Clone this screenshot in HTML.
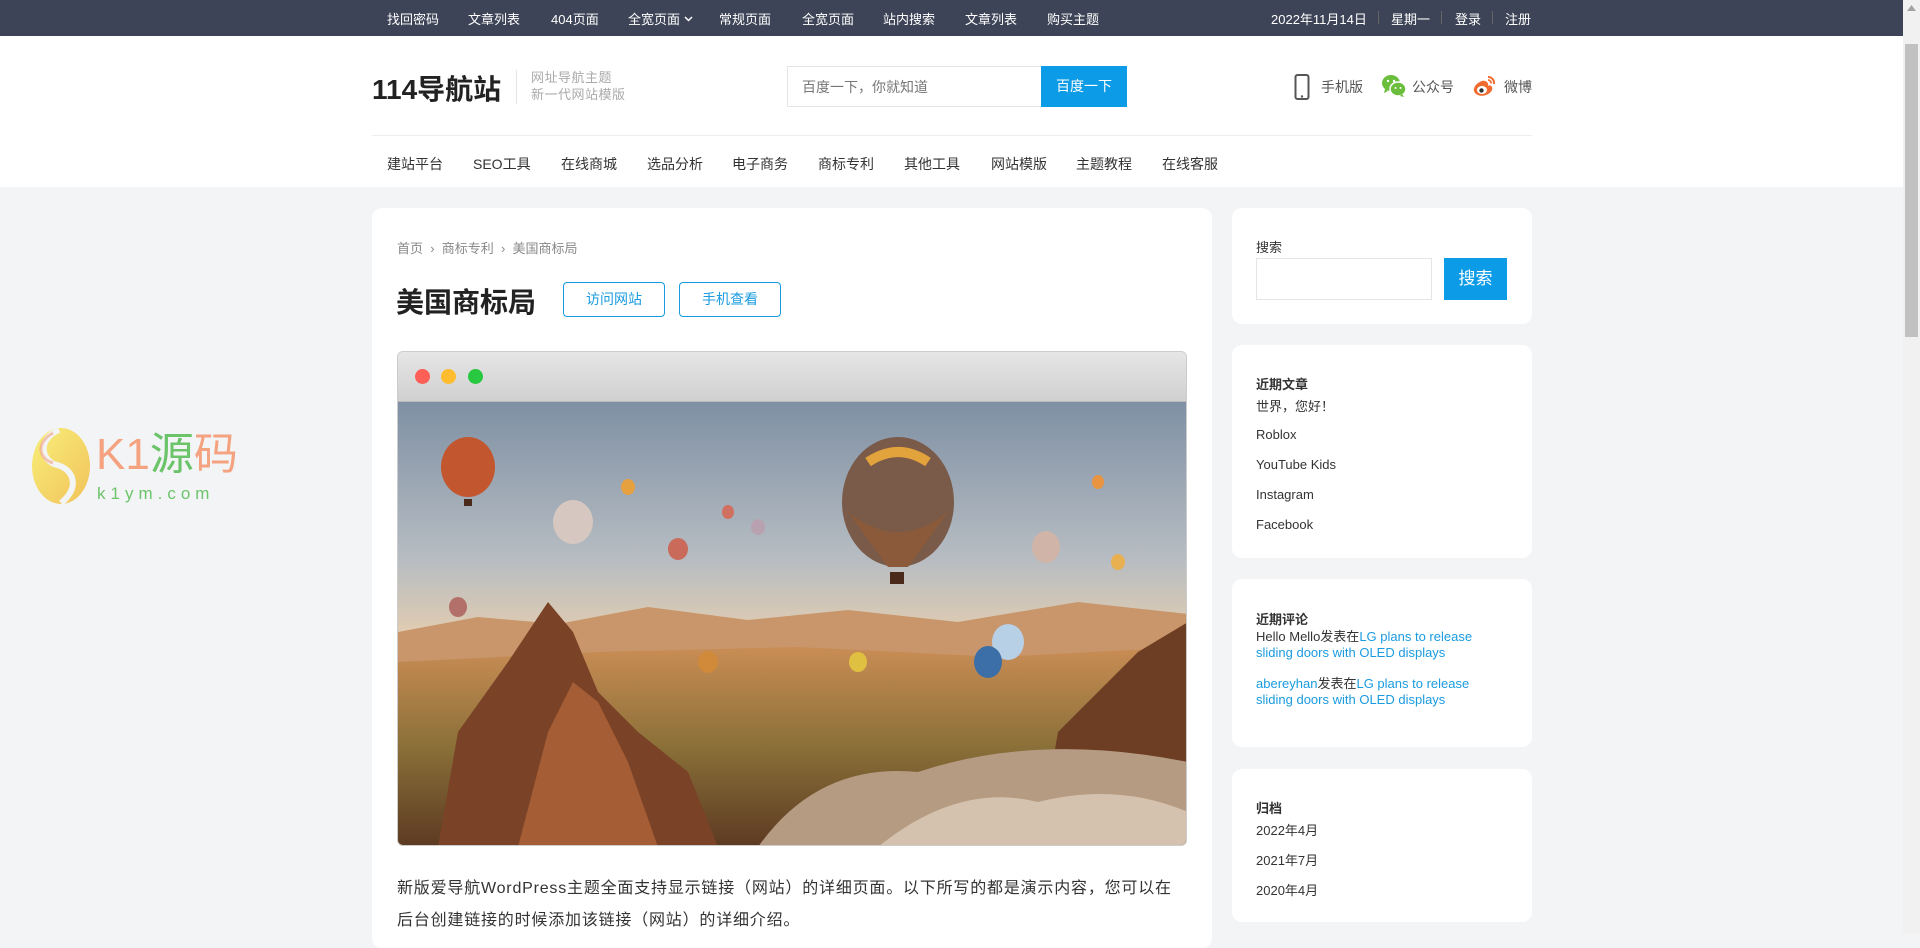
<!DOCTYPE html>
<html><head><meta charset="utf-8">
<style>
*{margin:0;padding:0;box-sizing:border-box}
body{width:1920px;height:933px;overflow:hidden;background:#f3f4f6;font-family:"Liberation Sans","Noto Sans CJK SC",sans-serif;color:#333;position:relative}
.a{position:absolute;white-space:nowrap}
#top{position:absolute;left:0;top:0;width:1903px;height:36px;background:#3e4457;color:#fff;font-size:13px}
#top .a{top:9px}
#hdr{position:absolute;left:0;top:36px;width:1903px;height:151px;background:#fff}
.nav2{font-size:14px;color:#333;top:118px}
.card{position:absolute;background:#fff;border-radius:10px}
.sb{font-size:13px;color:#333}
.blue{color:#1a9be0}
#scroll{position:absolute;left:1903px;top:0;width:17px;height:933px;background:#f1f1f1}
#thumb{position:absolute;left:1905px;top:44px;width:13px;height:293px;background:#c1c1c1}
.btn{position:absolute;height:35px;border:1px solid #1a9be0;border-radius:4px;color:#1a9be0;font-size:14px;text-align:center;line-height:33px}
</style></head><body>
<div id="top">
<span class="a" style="left:387px">找回密码</span>
<span class="a" style="left:468px">文章列表</span>
<span class="a" style="left:551px">404页面</span>
<span class="a" style="left:628px">全宽页面 <svg width="9" height="6" viewBox="0 0 9 6" style="vertical-align:2px"><path d="M1 1l3.5 3.5L8 1" stroke="#fff" stroke-width="1.5" fill="none"/></svg></span>
<span class="a" style="left:719px">常规页面</span>
<span class="a" style="left:802px">全宽页面</span>
<span class="a" style="left:883px">站内搜索</span>
<span class="a" style="left:965px">文章列表</span>
<span class="a" style="left:1047px">购买主题</span>
<span class="a" style="left:1271px">2022年11月14日</span>
<span class="a" style="left:1378px;top:11px;width:1px;height:13px;background:#666"></span>
<span class="a" style="left:1391px">星期一</span>
<span class="a" style="left:1441px;top:11px;width:1px;height:13px;background:#666"></span>
<span class="a" style="left:1455px">登录</span>
<span class="a" style="left:1492px;top:11px;width:1px;height:13px;background:#666"></span>
<span class="a" style="left:1505px">注册</span>
</div>
<div id="hdr">
<span class="a" style="left:372px;top:32px;font-size:28px;font-weight:bold;color:#222">114导航站</span>
<span class="a" style="left:516px;top:34px;width:1px;height:34px;background:#e5e5e5"></span>
<span class="a" style="left:531px;top:33px;font-size:13px;line-height:17px;color:#aaa;letter-spacing:0.5px">网址导航主题<br>新一代网站模版</span>
<div class="a" style="left:787px;top:30px;width:255px;height:41px;border:1px solid #e5e5e5;font-size:14px;color:#777;padding:10px 14px">百度一下，你就知道</div>
<div class="a" style="left:1041px;top:30px;width:86px;height:41px;background:#0c9be6;color:#fff;font-size:14px;text-align:center;line-height:41px">百度一下</div>
<svg class="a" style="left:1294px;top:38px" width="16" height="26" viewBox="0 0 16 26"><rect x="1.5" y="1" width="13" height="24" rx="2" fill="none" stroke="#555" stroke-width="2"/><rect x="3" y="4" width="10" height="16" fill="#fff"/><circle cx="8" cy="22.5" r="1.2" fill="#555"/></svg>
<span class="a" style="left:1321px;top:41px;font-size:14px;color:#555">手机版</span>
<svg class="a" style="left:1381px;top:38px" width="26" height="24" viewBox="0 0 26 24"><ellipse cx="10" cy="9" rx="9" ry="8" fill="#6bbd3c"/><path d="M4 15l-1 4 4-2z" fill="#6bbd3c"/><ellipse cx="17" cy="15" rx="8" ry="7" fill="#6bbd3c" stroke="#fff" stroke-width="1.5"/><path d="M21 20l2 3-4-1z" fill="#6bbd3c"/><circle cx="7" cy="7" r="1.2" fill="#fff"/><circle cx="13" cy="7" r="1.2" fill="#fff"/><circle cx="14.5" cy="14" r="1" fill="#fff"/><circle cx="19.5" cy="14" r="1" fill="#fff"/></svg>
<span class="a" style="left:1412px;top:41px;font-size:14px;color:#555">公众号</span>
<svg class="a" style="left:1472px;top:38px" width="26" height="24" viewBox="0 0 26 24"><path d="M10 7C4 9 1 14 2 17c1 4 7 6 12 4s7-5 6-8c-1-2-3-2-4-1 1-3-2-6-6-5z" fill="#f26b2e"/><ellipse cx="10" cy="16" rx="5" ry="4" fill="#fff"/><circle cx="9.5" cy="16.5" r="2.2" fill="#333"/><path d="M16 3a6 6 0 0 1 6 7" stroke="#f26b2e" stroke-width="2" fill="none"/><path d="M16 6a3 3 0 0 1 3 3.5" stroke="#f26b2e" stroke-width="1.8" fill="none"/></svg>
<span class="a" style="left:1504px;top:41px;font-size:14px;color:#555">微博</span>
<span class="a" style="left:372px;top:99px;width:1160px;height:1px;background:#eee"></span>
<span class="a nav2" style="left:387px">建站平台</span>
<span class="a nav2" style="left:473px">SEO工具</span>
<span class="a nav2" style="left:561px">在线商城</span>
<span class="a nav2" style="left:647px">选品分析</span>
<span class="a nav2" style="left:732px">电子商务</span>
<span class="a nav2" style="left:818px">商标专利</span>
<span class="a nav2" style="left:904px">其他工具</span>
<span class="a nav2" style="left:991px">网站模版</span>
<span class="a nav2" style="left:1076px">主题教程</span>
<span class="a nav2" style="left:1162px">在线客服</span>
</div>
<!-- watermark -->
<svg class="a" style="left:29px;top:425px" width="64" height="82" viewBox="0 0 64 82"><defs><linearGradient id="wg" x1="0" y1="0" x2="1" y2="1"><stop offset="0" stop-color="#f7ef7a"/><stop offset="1" stop-color="#f2c25a"/></linearGradient></defs><ellipse cx="32" cy="41" rx="29" ry="38" fill="url(#wg)"/><path d="M30 5C8 14 12 36 28 40s24 22 4 38" stroke="#f3f4f6" stroke-width="6" fill="none"/><path d="M24 8C6 18 10 34 24 38" stroke="#f0a080" stroke-width="3" fill="none" opacity=".6"/></svg>
<span class="a" style="left:96px;top:430px;font-size:44px;color:#f4a27f;line-height:50px">K1<span style="color:#6cc46a">源</span>码</span>
<span class="a" style="left:97px;top:484px;font-size:17px;color:#6cc46a;letter-spacing:5px">k1ym.com</span>
<!-- main card -->
<div class="card" style="left:372px;top:208px;width:840px;height:740px"></div>
<span class="a" style="left:397px;top:238px;font-size:13px;color:#888">首页 &nbsp;›&nbsp; 商标专利 &nbsp;›&nbsp; 美国商标局</span>
<span class="a" style="left:396px;top:281px;font-size:28px;font-weight:bold;color:#222">美国商标局</span>
<div class="btn" style="left:563px;top:282px;width:102px">访问网站</div>
<div class="btn" style="left:679px;top:282px;width:102px">手机查看</div>
<div class="a" style="left:397px;top:351px;width:790px;height:495px;border:1px solid #ccc;border-radius:6px;overflow:hidden">
 <div style="height:50px;background:linear-gradient(#e6e6e6,#d0d0d0);border-bottom:1px solid #bbb;position:relative">
  <span class="a" style="left:17px;top:17px;width:15px;height:15px;border-radius:50%;background:#fe5f57"></span>
  <span class="a" style="left:43px;top:17px;width:15px;height:15px;border-radius:50%;background:#febc2e"></span>
  <span class="a" style="left:70px;top:17px;width:15px;height:15px;border-radius:50%;background:#28c840"></span>
 </div>
 <svg width="790" height="445" viewBox="0 0 790 445" style="display:block">
 <defs>
  <linearGradient id="sky" x1="0" y1="0" x2="0" y2="1"><stop offset="0" stop-color="#7f90a4"/><stop offset=".35" stop-color="#b6bcc2"/><stop offset=".55" stop-color="#e8cfae"/><stop offset="1" stop-color="#d7a070"/></linearGradient>
  <linearGradient id="land" x1="0" y1="0" x2="0" y2="1"><stop offset="0" stop-color="#c98d55"/><stop offset=".5" stop-color="#8a7038"/><stop offset="1" stop-color="#5c3a22"/></linearGradient>
 </defs>
 <rect width="790" height="445" fill="url(#sky)"/>
 <path d="M0 230 L80 215 L160 222 L250 205 L350 218 L450 208 L560 220 L680 200 L790 212 L790 445 L0 445Z" fill="#c9956a"/>
 <path d="M0 260 L200 250 L400 245 L600 255 L790 245 L790 445 L0 445Z" fill="url(#land)"/>
 <path d="M40 445 L60 330 L110 260 L150 200 L175 230 L200 290 L240 330 L290 370 L320 445Z" fill="#7a4226"/>
 <path d="M120 445 L150 330 L175 280 L200 300 L230 360 L260 445Z" fill="#a55d35"/>
 <path d="M640 445 L660 330 L700 290 L740 250 L790 220 L790 445Z" fill="#6e3e24"/>
 <path d="M360 445 Q420 360 520 370 Q640 330 790 360 L790 445Z" fill="#b59b82"/>
 <path d="M480 445 Q560 380 640 400 Q720 380 790 410 L790 445Z" fill="#d5c2ae"/>
 <ellipse cx="500" cy="100" rx="56" ry="65" fill="#7a5a48"/>
 <path d="M450 110 Q500 150 550 110 L510 165 L490 165Z" fill="#8a5a3a"/>
 <path d="M470 60 Q500 40 530 60" stroke="#e3a33c" stroke-width="10" fill="none"/>
 <rect x="492" y="170" width="14" height="12" fill="#4a2a1a"/>
 <ellipse cx="70" cy="65" rx="27" ry="30" fill="#c2572f"/><rect x="66" y="97" width="8" height="7" fill="#4a2a1a"/>
 <ellipse cx="175" cy="120" rx="20" ry="22" fill="#d6c8c0"/>
 <ellipse cx="648" cy="145" rx="14" ry="16" fill="#d0b4a8"/>
 <ellipse cx="280" cy="147" rx="10" ry="11" fill="#c96a5a"/>
 <ellipse cx="60" cy="205" rx="9" ry="10" fill="#b3706a"/>
 <ellipse cx="230" cy="85" rx="7" ry="8" fill="#e5a040"/>
 <ellipse cx="330" cy="110" rx="6" ry="7" fill="#d07060"/>
 <ellipse cx="360" cy="125" rx="7" ry="8" fill="#b9a2b0"/>
 <ellipse cx="610" cy="240" rx="16" ry="18" fill="#b8d0e6"/>
 <ellipse cx="590" cy="260" rx="14" ry="16" fill="#3c6fa8"/>
 <ellipse cx="460" cy="260" rx="9" ry="10" fill="#e0c040"/>
 <ellipse cx="310" cy="260" rx="10" ry="11" fill="#d08a3a"/>
 <ellipse cx="720" cy="160" rx="7" ry="8" fill="#e8b050"/>
 <ellipse cx="700" cy="80" rx="6" ry="7" fill="#e89440"/>
 </svg>
</div>
<div class="a" style="left:397px;top:873px;font-size:16px;line-height:32px;color:#333;letter-spacing:0.8px">新版爱导航WordPress主题全面支持显示链接（网站）的详细页面。以下所写的都是演示内容，您可以在<br>后台创建链接的时候添加该链接（网站）的详细介绍。</div>
<!-- sidebar -->
<div class="card" style="left:1232px;top:208px;width:300px;height:116px"></div>
<span class="a sb" style="left:1256px;top:237px">搜索</span>
<div class="a" style="left:1256px;top:258px;width:176px;height:42px;border:1px solid #e5e5e5"></div>
<div class="a" style="left:1444px;top:258px;width:63px;height:42px;background:#0c9be6;color:#fff;font-size:17px;text-align:center;line-height:42px">搜索</div>
<div class="card" style="left:1232px;top:345px;width:300px;height:213px"></div>
<span class="a sb" style="left:1256px;top:374px;font-weight:bold">近期文章</span>
<span class="a sb" style="left:1256px;top:396px">世界，您好！</span>
<span class="a sb" style="left:1256px;top:427px">Roblox</span>
<span class="a sb" style="left:1256px;top:457px">YouTube Kids</span>
<span class="a sb" style="left:1256px;top:487px">Instagram</span>
<span class="a sb" style="left:1256px;top:517px">Facebook</span>
<div class="card" style="left:1232px;top:579px;width:300px;height:168px"></div>
<span class="a sb" style="left:1256px;top:609px;font-weight:bold">近期评论</span>
<div class="a sb" style="left:1256px;top:629px;line-height:16px">Hello Mello发表在<span class="blue">LG plans to release<br>sliding doors with OLED displays</span></div>
<div class="a sb" style="left:1256px;top:676px;line-height:16px"><span class="blue">abereyhan</span>发表在<span class="blue">LG plans to release<br>sliding doors with OLED displays</span></div>
<div class="card" style="left:1232px;top:769px;width:300px;height:153px"></div>
<span class="a sb" style="left:1256px;top:798px;font-weight:bold">归档</span>
<span class="a sb" style="left:1256px;top:820px">2022年4月</span>
<span class="a sb" style="left:1256px;top:850px">2021年7月</span>
<span class="a sb" style="left:1256px;top:880px">2020年4月</span>
<div id="scroll"></div><div id="thumb"></div>
<svg class="a" style="left:1907px;top:5px" width="9" height="6"><path d="M0 6L4.5 0L9 6Z" fill="#a3a3a3"/></svg>
</body></html>
